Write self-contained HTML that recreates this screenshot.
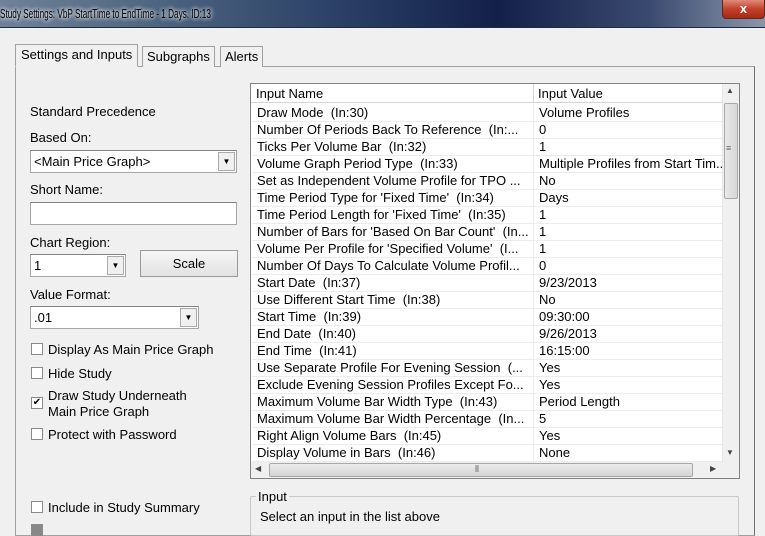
<!DOCTYPE html>
<html><head><style>
*{margin:0;padding:0;box-sizing:border-box}
body{width:765px;height:527px;overflow:hidden;background:#f0f0f0;font-family:"Liberation Sans",sans-serif;font-size:13px;color:#000;position:relative}
.a{position:absolute;white-space:nowrap}
#title{left:0;top:0;width:765px;height:28px;background:linear-gradient(90deg,#6f8297 0%,#4e6680 20%,#2a3f66 45%,#13204a 65%,#3b4a70 85%,#8a97aa 100%);border-bottom:1px solid #1e2a40}
#close{left:722px;top:0;width:43px;height:19px;background:linear-gradient(#e08a78,#c2412a 50%,#a82a14);border:1px solid #5a2a20;border-top:none;border-radius:0 0 4px 4px;color:#fff;font-weight:bold;text-align:center;line-height:18px;font-size:13px}
.tab{border:1px solid #a0a0a0;border-bottom:none;background:#f0f0f0;height:21px;line-height:20px;padding:0 4px}
.cb{width:12px;height:12px;border:1px solid #8a8a8a;background:#fff}
.inp{background:#fff;border:1px solid #a6a6a6;border-top-color:#828282}
.dd{position:absolute;right:1px;top:1px;width:17px;bottom:1px;background:#f0f0f0;border:1px solid #aaa;font-size:8px;text-align:center;line-height:18px}
.row{position:absolute;left:1px;width:470px;height:17px;border-bottom:1px solid #ececec;line-height:16px}
.row span{position:absolute;left:5px}
.row b{font-weight:normal;position:absolute;left:287px}
</style></head><body>
<div class="a" id="title"></div>
<div class="a" style="left:0;top:6px;color:#000;font-size:13px;transform:scaleX(0.63);transform-origin:0 0;text-shadow:0 0 6px #fff,0 0 6px #fff">Study Settings: VbP StartTime to EndTime - 1 Days. ID:13</div>
<div class="a" id="close">x</div>

<div class="a" style="left:15px;top:66px;width:740px;height:470px;border:1px solid #a0a0a0;border-right-color:#707070"></div>
<div class="a tab" style="left:15px;top:44px;height:23px;background:#f0f0f0;border-bottom:1px solid #f0f0f0;padding:0 5px;line-height:20px">Settings and Inputs</div>
<div class="a tab" style="left:142px;top:46px">Subgraphs</div>
<div class="a tab" style="left:220px;top:46px">Alerts</div>

<div class="a" style="left:30px;top:104px">Standard Precedence</div>
<div class="a" style="left:30px;top:130px">Based On:</div>
<div class="a inp" style="left:30px;top:150px;width:207px;height:23px"><span class="a" style="left:3px;top:3px">&lt;Main Price Graph&gt;</span><div class="dd">▼</div></div>
<div class="a" style="left:30px;top:182px">Short Name:</div>
<div class="a inp" style="left:30px;top:202px;width:207px;height:23px"></div>
<div class="a" style="left:30px;top:235px">Chart Region:</div>
<div class="a inp" style="left:30px;top:254px;width:96px;height:23px"><span class="a" style="left:3px;top:3px">1</span><div class="dd">▼</div></div>
<div class="a" style="left:140px;top:250px;width:98px;height:27px;border:1px solid #999;background:linear-gradient(#f6f6f6,#e2e2e2);text-align:center;line-height:25px">Scale</div>
<div class="a" style="left:30px;top:287px">Value Format:</div>
<div class="a inp" style="left:30px;top:306px;width:169px;height:23px"><span class="a" style="left:3px;top:3px">.01</span><div class="dd">▼</div></div>

<div class="a cb" style="left:31px;top:343px"></div><div class="a" style="left:48px;top:342px">Display As Main Price Graph</div>
<div class="a cb" style="left:31px;top:367px"></div><div class="a" style="left:48px;top:366px">Hide Study</div>
<div class="a cb" style="left:31px;top:397px;font-size:10px;line-height:10px;text-align:center">✔</div><div class="a" style="left:48px;top:388px;line-height:16px">Draw Study Underneath<br>Main Price Graph</div>
<div class="a cb" style="left:31px;top:428px"></div><div class="a" style="left:48px;top:427px">Protect with Password</div>
<div class="a cb" style="left:31px;top:501px"></div><div class="a" style="left:48px;top:500px">Include in Study Summary</div>
<div class="a cb" style="left:31px;top:524px;background:#888"></div>

<div class="a" style="left:250px;top:83px;width:490px;height:396px;border:1px solid #828282;background:#fff">
 <div class="a" style="left:0;top:0;width:471px;height:19px;border-bottom:1px solid #d5d5d5;background:#fff"></div>
 <div class="a" style="left:5px;top:2px">Input Name</div>
 <div class="a" style="left:282px;top:0;width:1px;height:19px;background:#d5d5d5"></div>
 <div class="a" style="left:287px;top:2px">Input Value</div>
 <div style="position:absolute;left:0;top:21px">
 <div class="row" style="top:0"><span>Draw Mode &nbsp;(In:30)</span><b>Volume Profiles</b></div>
 <div class="row" style="top:17px"><span>Number Of Periods Back To Reference &nbsp;(In:...</span><b>0</b></div>
 <div class="row" style="top:34px"><span>Ticks Per Volume Bar &nbsp;(In:32)</span><b>1</b></div>
 <div class="row" style="top:51px"><span>Volume Graph Period Type &nbsp;(In:33)</span><b>Multiple Profiles from Start Tim...</b></div>
 <div class="row" style="top:68px"><span>Set as Independent Volume Profile for TPO ...</span><b>No</b></div>
 <div class="row" style="top:85px"><span>Time Period Type for 'Fixed Time' &nbsp;(In:34)</span><b>Days</b></div>
 <div class="row" style="top:102px"><span>Time Period Length for 'Fixed Time' &nbsp;(In:35)</span><b>1</b></div>
 <div class="row" style="top:119px"><span>Number of Bars for 'Based On Bar Count' &nbsp;(In...</span><b>1</b></div>
 <div class="row" style="top:136px"><span>Volume Per Profile for 'Specified Volume' &nbsp;(I...</span><b>1</b></div>
 <div class="row" style="top:153px"><span>Number Of Days To Calculate Volume Profil...</span><b>0</b></div>
 <div class="row" style="top:170px"><span>Start Date &nbsp;(In:37)</span><b>9/23/2013</b></div>
 <div class="row" style="top:187px"><span>Use Different Start Time &nbsp;(In:38)</span><b>No</b></div>
 <div class="row" style="top:204px"><span>Start Time &nbsp;(In:39)</span><b>09:30:00</b></div>
 <div class="row" style="top:221px"><span>End Date &nbsp;(In:40)</span><b>9/26/2013</b></div>
 <div class="row" style="top:238px"><span>End Time &nbsp;(In:41)</span><b>16:15:00</b></div>
 <div class="row" style="top:255px"><span>Use Separate Profile For Evening Session &nbsp;(...</span><b>Yes</b></div>
 <div class="row" style="top:272px"><span>Exclude Evening Session Profiles Except Fo...</span><b>Yes</b></div>
 <div class="row" style="top:289px"><span>Maximum Volume Bar Width Type &nbsp;(In:43)</span><b>Period Length</b></div>
 <div class="row" style="top:306px"><span>Maximum Volume Bar Width Percentage &nbsp;(In...</span><b>5</b></div>
 <div class="row" style="top:323px"><span>Right Align Volume Bars &nbsp;(In:45)</span><b>Yes</b></div>
 <div class="row" style="top:340px"><span>Display Volume in Bars &nbsp;(In:46)</span><b>None</b></div>
 </div>
 <div class="a" style="left:282px;top:19px;width:1px;height:358px;background:#ececec"></div>
 <div class="a" style="left:471px;top:0;width:17px;height:378px;background:#f0f0f0;border-left:1px solid #e6e6e6"></div>
 <div class="a" style="left:475px;top:2px;font-size:8px;color:#444">▲</div>
 <div class="a" style="left:473px;top:19px;width:14px;height:96px;background:linear-gradient(90deg,#e8e8e8,#d6d6d6);border:1px solid #a8a8a8;border-radius:2px"></div>
 <div class="a" style="left:475px;top:59px;font-size:9px;color:#666">≡</div>
 <div class="a" style="left:475px;top:364px;font-size:8px;color:#444">▼</div>
 <div class="a" style="left:0;top:378px;width:488px;height:16px;background:#f0f0f0"></div>
 <div class="a" style="left:4px;top:380px;font-size:8px;color:#444">◀</div>
 <div class="a" style="left:18px;top:379px;width:424px;height:14px;background:linear-gradient(#ececec,#d4d4d4);border:1px solid #a8a8a8;border-radius:2px"></div>
 <div class="a" style="left:224px;top:380px;font-size:9px;color:#666">⦀</div>
 <div class="a" style="left:459px;top:380px;font-size:8px;color:#444">▶</div>
</div>

<div class="a" style="left:250px;top:496px;width:489px;height:40px;border:1px solid #c8c8c8;border-radius:2px"></div>
<div class="a" style="left:256px;top:489px;background:#f0f0f0;padding:0 2px">Input</div>
<div class="a" style="left:260px;top:509px">Select an input in the list above</div>
</body></html>
